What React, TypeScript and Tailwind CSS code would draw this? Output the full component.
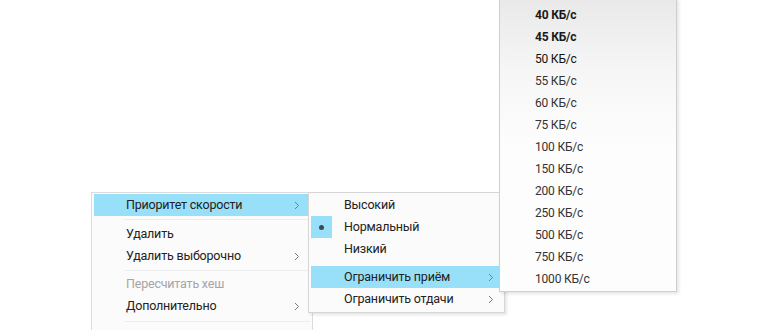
import React from 'react';

const font = { fontFamily: 'Roboto, "Noto Sans", sans-serif' };

function Chevron() {
  return (
    <svg width="6" height="9" viewBox="0 0 6 9" className="shrink-0">
      <path d="M1 1 L4.5 4.5 L1 8" fill="none" stroke="#7a7a7a" strokeWidth="1" />
    </svg>
  );
}

function Sep({ h }: { h: string }) {
  return (
    <div className={`flex items-center pl-[30px] ${h}`}>
      <div className="h-px flex-1 bg-[#ededed]" />
    </div>
  );
}

export default function App() {
  const speeds = ['40', '45', '50', '55', '60', '75', '100', '150', '200', '250', '500', '750', '1000'];

  return (
    <div className="relative w-[770px] h-[330px] overflow-hidden bg-white text-[12.5px] tracking-[-0.2px] text-[#222]" style={font}>
      {/* основное меню */}
      <div className="absolute left-[91px] top-[192px] w-[222px] h-[160px] border border-[#dcdcdc] bg-[#fbfbfb] px-[2px] pt-[1px]">
        <div className="flex h-[22px] items-center bg-[#98e0f9] pl-[32px] pr-[10px]">
          <span className="flex-1">Приоритет скорости</span>
          <Chevron />
        </div>
        <Sep h="h-[7px]" />
        <div className="flex h-[22px] items-center pl-[32px] pr-[10px]">
          <span className="flex-1">Удалить</span>
        </div>
        <div className="flex h-[22px] items-center pl-[32px] pr-[10px]">
          <span className="flex-1">Удалить выборочно</span>
          <Chevron />
        </div>
        <Sep h="h-[6px]" />
        <div className="flex h-[22px] items-center pl-[32px] pr-[10px] text-[#a5a5a5]">
          <span className="flex-1">Пересчитать хеш</span>
        </div>
        <div className="flex h-[22px] items-center pl-[32px] pr-[10px]">
          <span className="flex-1">Дополнительно</span>
          <Chevron />
        </div>
        <Sep h="h-[8px]" />
      </div>

      {/* приоритет */}
      <div className="absolute left-[308px] top-[192px] w-[197px] h-[121px] border border-[#d6d6d6] bg-[#fbfbfb] px-[2px] pt-[1px] shadow-[2px_2px_3px_rgba(0,0,0,0.1)]">
        <div className="flex h-[22px] items-center pl-[33px] pr-[6px]">Высокий</div>
        <div className="flex h-[22px] items-center pr-[6px]">
          <div className="flex h-[22px] w-[21px] items-center justify-center bg-[#98e0f9]">
            <div className="h-[5px] w-[5px] rounded-full bg-[#3a4a55]" />
          </div>
          <span className="pl-[12px]">Нормальный</span>
        </div>
        <div className="flex h-[22px] items-center pl-[33px] pr-[6px]">Низкий</div>
        <div className="h-[6px]" />
        <div className="flex h-[22px] items-center bg-[#98e0f9] pl-[33px] pr-[8px]">
          <span className="flex-1">Ограничить приём</span>
          <Chevron />
        </div>
        <div className="flex h-[22px] items-center pl-[33px] pr-[8px]">
          <span className="flex-1">Ограничить отдачи</span>
          <Chevron />
        </div>
      </div>

      {/* скорость приёма */}
      <div className="absolute left-[499px] top-[-2px] w-[178px] h-[294px] border border-[#cfcfcf] bg-[linear-gradient(to_bottom,#e9e9e9_0%,#f6f6f6_25%,#fdfdfd_50%,#fdfdfd_100%)] pt-[5px] text-[12px] text-[#333] shadow-[2px_2px_3px_rgba(0,0,0,0.1)]">
        {speeds.map((s, i) => (
          <div
            key={s}
            className={`flex h-[22px] items-center pl-[35px] ${i < 2 ? 'font-bold text-[#1a1a1a]' : i === 2 ? 'text-[#111]' : ''}`}
          >
            {s} КБ/с
          </div>
        ))}
      </div>
    </div>
  );
}
